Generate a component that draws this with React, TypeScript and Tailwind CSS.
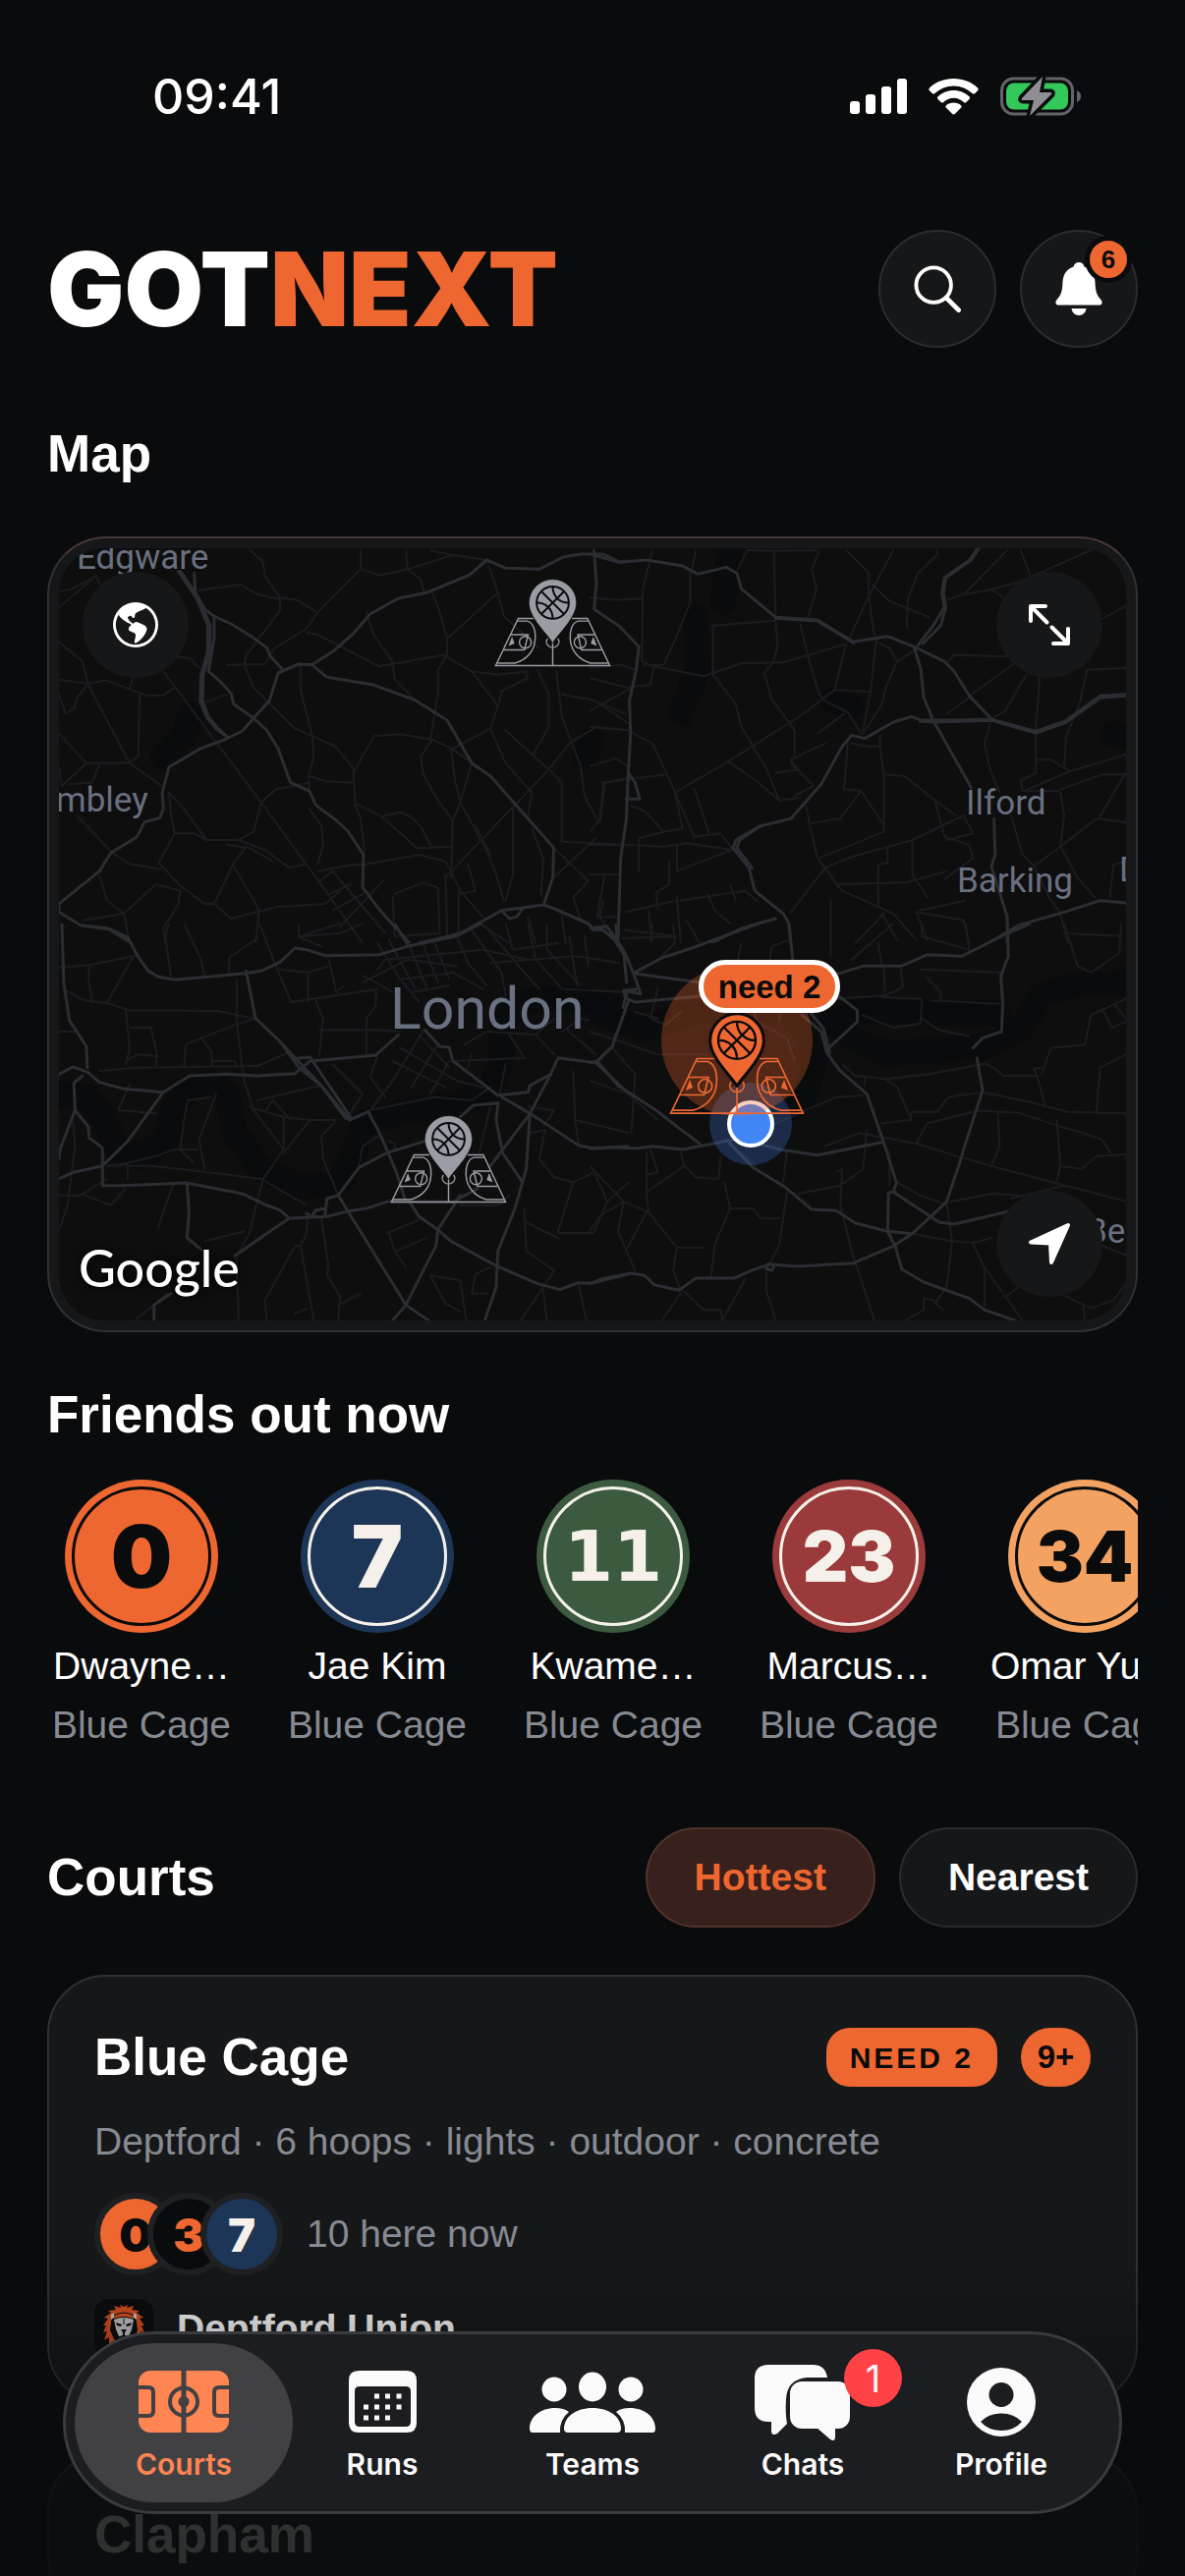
import React from 'react'
import { BsGlobeAmericas } from 'react-icons/bs'

type Tile = {
  id: string
  x: number
  y: number
  width: number
  height: number
  viewBox: string
  water: string[]
  major: string[]
  minor: string[]
}

// Road network, one entry per map tile. Every string is a polyline.
const tiles: Tile[] = [
  {
    id: 'nw',
    x: 40,
    y: 540,
    width: 600,
    height: 420,
    viewBox: '0 0 1568 1260',
    water: ['400,560 390,620 330,690', '1470,640 1450,690'],
    major: [
      '370,125 420,210 448,290 448,370 430,440 428,520 445,570 470,605 500,630',
      '376,125 426,210 454,290 454,370 436,440 434,520 451,570 476,605 500,630',
      '412,130 415,190 440,240 465,262 465,330 450,430 480,460 510,497 517,530 570,573 605,610 635,665 668,770 718,795 735,838 790,885 822,920 862,990 860,1090 910,1165 985,1260',
      '465,262 510,285 560,320 605,358 615,385 648,425',
      '52,1140 160,1040 190,985 260,935 280,890 320,878 330,850 327,800 345,722 430,665 490,640 540,612 570,573 612,520 635,435 690,408 725,410 765,448 885,470 1000,518 1085,580 1150,710 1200,750 1368,968 1366,1060 1342,1140',
      '725,410 780,370 835,315 880,255 955,207 1030,190 1145,135 1190,90 1240,115 1330,118 1395,80 1440,72 1500,72 1545,97 1568,93',
      '52,1140 52,1165 110,1205 185,1217 245,1260',
      '1010,1260 1120,1230 1230,1160 1342,1143 1370,1155 1460,1200 1475,1220 1500,1220 1540,1258',
      '1230,1160 1250,1185 1270,1180 1285,1155',
    ],
    minor: [
      '52,185 85,180 150,140 165,170',
      '52,235 140,150',
      '52,340 115,400 130,470 240,710 325,780',
      '52,455 130,468 175,457 290,505 330,503 360,480',
      '250,450 240,480',
      '267,495 263,690 240,710 125,710 52,620',
      '130,470 100,510 95,540 70,560 52,500',
      '125,710 60,780 52,720',
      '160,715 140,770 80,775',
      '330,430 590,830 780,1130 860,1260',
      '365,385 400,390 425,420',
      '425,182 535,165 580,195 640,210 640,245 550,380 545,410 570,480 680,605 785,657 835,725 840,840 855,880 865,990',
      '560,60 595,95 600,140 640,205 685,212 740,250 710,300 625,360 600,408 500,410',
      '500,500 440,525',
      '740,250 855,118 855,60',
      '855,118 905,137 980,118 1100,75 1190,90',
      '975,60 980,118 1015,150 1022,185',
      '1040,60 1100,75',
      '710,312 740,318 905,415 1075,380 1150,430 1220,440 1300,430',
      '870,250 890,320 940,400 945,455 1000,518',
      '1045,190 1060,230 1085,330 1220,190 1190,90',
      '1085,330 1085,380 1060,425 1060,500 1040,640',
      '695,410 695,490 725,620 730,690 717,745 718,795',
      '835,740 890,628 960,622 1045,638 1095,665 1150,710',
      '1045,638 1015,690 1020,740 1060,825 1100,885 1095,1060',
      '1150,710 1120,830 1100,885',
      '1095,665 1105,760 1120,830 1195,990 1215,1050 1235,1130',
      '845,835 910,873 960,860 990,875 1015,905 1045,970',
      '910,873 1005,970 1100,965',
      '865,1020 1010,990 1080,1010 1120,1100 1180,1180',
      '1150,430 1220,535 1200,605 1240,710 1310,800 1300,870',
      '1220,190 1235,260 1330,360',
      '1200,605 1100,665',
      '1220,535 1230,490 1300,450 1290,430',
      '1325,425 1355,500 1355,600 1315,680',
      '1375,430 1390,570 1440,720 1450,810 1487,890',
      '1390,500 1480,520 1568,590',
      '1240,610 1355,730 1410,650 1480,600 1568,610',
      '1355,730 1255,850 1080,1060',
      '1355,730 1390,770 1390,950 1568,960',
      '1260,850 1260,1050 1240,1130',
      '1310,910 1340,1000 1335,1110',
      '1500,770 1568,755',
      '1500,770 1490,890',
      '590,830 630,790 718,770',
      '718,750 760,765 835,770',
      '718,850 750,900 755,960 740,1020',
      '360,925 410,925 445,945 530,945 570,920 590,830',
      '530,945 600,975 665,1030 705,1020',
      '500,960 560,970 620,1010',
      '445,945 385,850 345,800 350,870 360,925 318,1015 375,1085 440,1140 465,1140 515,1020 550,965',
      '515,1020 585,1160 575,1260',
      '465,1140 510,1185 630,1150 760,1140 800,1100',
      '100,870 195,985 240,1018 325,1035',
      '160,1055 180,1130 225,1170 310,1080 375,1100 370,1140 330,1215 335,1260',
      '240,1260 225,1170 115,1190',
      '945,1110 1020,1075 1060,1090 1065,1230 945,1240 940,1120',
      '740,1040 835,1020 865,1020',
      '740,1075 780,1040 920,1230',
      '770,1110 830,1080',
      '780,1160 860,1110',
      '800,1210 915,1070',
      '690,1240 800,1200',
      '1080,1050 1085,1240',
      '1115,1100 1115,1240',
      '1140,1020 1160,1100 1120,1110',
      '1160,900 1200,990',
      '1368,968 1460,1070 1420,1120 1440,1190',
      '1368,1060 1480,940',
      '1540,1260 1490,1180 1500,1130',
      '1170,1200 1250,1260',
      '1300,1180 1320,1260',
      '1390,1180 1400,1260',
    ],
  },
  {
    id: 'ne',
    x: 600,
    y: 540,
    width: 606,
    height: 420,
    viewBox: '0 0 1568 1260',
    water: ['370,70 350,220', '280,260 285,420 240,560', '640,520 690,540', '1380,620 1400,630'],
    major: [
      '12,60 18,160 12,240 78,292 130,355 122,430 105,520 108,620 102,740 97,880 82,1000 75,1250',
      '102,740 120,770 132,820 97,820',
      '0,72 78,97 150,90 245,108 285,133 360,112 388,130 400,178 490,265 600,273 695,340 785,323 855,355 935,400 960,430 1000,505 1060,577',
      '490,268 600,276 695,343',
      '1025,55 1005,90 938,145 932,190 938,235 925,290 878,345',
      '1021,55 1001,90 934,145 928,190 934,235 905,290 865,350',
      '855,360 872,420 880,510 905,580 1005,785',
      '1065,880 1068,990 1058,1025 1100,1180 1100,1260',
      '1412,500 1345,505 1255,580 1175,613 1060,577 905,580 870,578 848,568 800,585 725,635 690,625 665,660 610,775 530,880 450,902 385,945 378,970 420,1030 435,1100 510,1170 525,1200 530,1260',
      '1412,505 1345,511 1255,586 1175,618 1060,580 905,585 870,582',
      '450,902 395,945 388,970 428,1030',
      '320,1260 400,1215 490,1185',
      '1050,1260 1130,1205 1250,1165 1345,1130 1412,1137',
    ],
    minor: [
      '165,60 140,180 138,400 170,415 300,445 400,405 510,403 670,348',
      '265,120 265,220 230,320 195,410 140,412',
      '0,205 70,212 138,208',
      '280,60 270,120',
      '415,60 390,120',
      '415,60 485,62 600,60',
      '485,62 490,260',
      '605,60 585,120 598,180 575,265',
      '675,60 735,130 735,200 680,340',
      '800,60 735,200',
      '915,60 915,75 865,130 838,210 835,300',
      '745,165 790,215 895,265',
      '735,200 750,320',
      '1100,60 985,195 945,210',
      '985,195 1060,180 1135,155 1320,60',
      '1135,60 1160,135',
      '1060,180 1090,205',
      '1350,270 1412,230',
      '325,290 490,275 495,350 485,400 460,435 480,515 540,610 540,695',
      '325,290 325,440 385,530 400,600 465,725 500,825 555,815',
      '225,800 365,705 550,570 645,487 740,492 720,610',
      '645,487 675,348',
      '740,492 755,330',
      '555,285 575,385 605,500 620,520 680,555 715,620',
      '755,340 790,360 810,400 780,480 770,530 720,620',
      '810,400 850,370',
      '600,620 670,560',
      '365,705 445,770 500,825',
      '530,710 590,780 540,810',
      '490,740 550,730 530,700 620,650',
      '225,800 275,935 345,925 375,970',
      '275,785 315,925',
      '780,745 830,750 910,825 965,870',
      '690,650 735,660 765,660 775,750 775,920 605,1000',
      '680,650 670,790 715,795 775,900',
      '765,625 765,660',
      '570,840 580,900 600,1000 620,1030 665,1100 800,1170 860,1250',
      '580,895 660,880 715,795',
      '620,1030 680,1000 850,945 985,870',
      '850,945 850,1050 890,1120',
      '785,965 785,1015 760,1020 760,1150',
      '650,1080 835,1075 940,1040',
      '665,1100 650,1080 620,1030 530,1165',
      '910,825 935,935 1000,960 1010,1000 935,1065',
      '985,870 1010,925 940,945',
      '1000,505 1120,405',
      '945,400 960,380 1100,385',
      '1150,440 1095,550 1060,575',
      '1185,450 1175,610 1175,740 1135,765 1140,795',
      '940,560 1000,510',
      '1055,590 1040,650 1055,730 1080,800',
      '1175,700 1215,700 1265,735 1145,795',
      '1265,735 1412,685',
      '1145,795 1230,795 1350,745 1412,745',
      '1110,870 1140,990 1170,1025 1240,965 1335,880 1412,890',
      '1412,740 1340,880',
      '1240,800 1250,870 1240,965 1285,1060 1330,1120',
      '1412,420 1310,425 1290,530 1255,630 1250,720',
      '635,1130 635,1260',
      '775,1170 700,1260',
      '770,1170 810,1250',
      '860,1165 985,1190 1000,1260',
      '860,1165 890,1250',
      '870,1160 990,1130',
      '1210,1120 1240,1170 1260,1260',
      '1370,1120 1380,1020 1412,1010',
      '1170,1025 1210,1120',
      '0,450 100,480 160,470 170,415',
      '0,420 80,410 120,425',
      '0,600 100,610 165,650 205,745 225,800',
      '0,550 105,485',
      '0,515 95,560',
      '40,770 100,760 205,745',
      '0,720 70,695 100,720',
      '40,770 30,880 0,920',
      '110,840 150,860 195,920 245,910 225,800',
      '0,960 100,960 195,965 255,955 375,975',
      '130,1040 130,940 195,920',
      '230,960 230,1040 375,975',
      '0,1050 75,1050',
      '40,1050 20,1180 75,1180',
      '95,1165 210,1135 410,1100 440,1130',
      '180,1155 175,1105 210,1080 210,1010',
      '230,1120 240,1260',
      '370,1080 385,1130',
      '155,1160 165,1260',
      '255,1190 290,1260',
      '310,1110 330,1160 370,1200',
      '95,1220 230,1240',
    ],
  },
  {
    id: 'sw',
    x: 40,
    y: 940,
    width: 600,
    height: 440,
    viewBox: '0 0 1568 1320',
    water: [
      '52,520 130,530 175,600 210,690 270,712 330,670 360,560 400,500 460,485 500,520 520,640 590,750 700,805 800,790 840,690 860,610 950,580 1100,550 1195,520 1225,430 1235,300 1280,240 1400,225 1500,245 1568,280',
    ],
    major: [
      '60,0 65,180 80,295 125,375 128,440',
      '110,5 185,15 235,42 262,100 290,145 315,162 360,172 550,152 590,145 640,118 680,75 710,80 760,98 905,95 985,68 1110,38 1175,0',
      '550,145 575,290 640,360 680,410 750,495 825,600 875,575 905,640 950,760 975,850',
      '640,360 690,440 750,495 815,595',
      '680,412 720,408 830,595',
      '52,460 90,438 130,455 160,485 225,505 330,515 400,465 500,460 580,465 680,458 720,420 745,418 895,402 955,340',
      '115,465 92,487 95,570 55,690 52,720',
      '95,570 130,620 133,655 168,685 168,800 225,800 390,792 540,825 600,858 640,875 665,900 765,895 815,880 870,870 930,848 1100,850 1165,810',
      '52,780 90,760 168,740 235,665 330,515',
      '393,792 398,880 393,960 430,995',
      '665,900 600,950 520,1015',
      '350,1130 305,1165 305,1212',
      '760,890 765,840 795,830 850,745 925,700 1025,665',
      '795,830 975,1165 1035,1212',
      '940,1212 975,1165 1030,1040 1055,985 1060,935 1010,895 985,850',
      '1060,935 1120,830',
      '1060,935 1095,970 1215,1045 1325,1100 1385,1118 1430,1098 1470,1098 1568,1070',
      '1185,1212 1215,1110 1220,1000 1265,870 1295,750 1305,580',
      '1025,325 1065,375 1090,378 1100,420 1220,525 1300,515 1305,495 1360,460 1380,410 1480,425 1568,520',
      '1480,425 1525,375 1562,215',
      '1460,0 1475,20 1495,15 1530,50 1555,95 1562,180',
      '1120,590 1155,555 1220,548 1215,600 1232,700 1285,790',
      '1230,530 1305,580 1435,678 1475,687 1568,680',
      '1360,460 1305,580 1200,740',
      '945,0 980,65',
      '710,885 725,895 735,875 760,870',
    ],
    minor: [
      '52,135 140,125 255,98',
      '135,125 130,160 140,240',
      '70,205 120,235 180,243 240,265 475,267 570,290',
      '250,100 180,243',
      '345,0 335,40 350,160',
      '230,265 240,380 230,430',
      '243,318 297,318 313,400 310,440',
      '230,420 260,400 313,405',
      '570,292 520,310 430,350 390,370 385,435',
      '430,350 458,390 460,435',
      '460,420 520,420 525,440',
      '52,330 95,330',
      '160,450 260,440 580,435 670,390',
      '525,170 525,300 540,440 545,480 570,570 650,690',
      '385,0 430,110 440,165',
      '585,0 640,160 670,240 900,200',
      '715,150 715,240',
      '640,140 715,150 770,130',
      '735,235 755,290 745,400',
      '505,150 505,105 580,45',
      '690,0 690,40 750,70',
      '690,40 800,30 860,0',
      '770,110 790,210 810,190',
      '895,205 895,250 870,290 870,400',
      '745,325 900,325 960,330',
      '560,560 645,590 720,600 790,600',
      '650,595 650,690 595,780 560,940 525,1020 530,1212',
      '720,600 650,700',
      '580,540 690,510 750,495',
      '600,575 620,540 670,600',
      '790,600 750,650 755,720 795,830',
      '455,530 395,540 385,600 375,690 410,730',
      '470,520 425,660 440,750',
      '240,490 210,570 310,580',
      '180,740 235,735 235,780',
      '200,740 310,710 360,690 420,690',
      '235,740 300,740 450,760 590,780 710,860',
      '52,830 110,830 180,780',
      '120,830 190,860 230,810',
      '355,800 315,930',
      '90,605 95,680 75,860 55,930',
      '440,970 545,940',
      '605,1212 600,1150 680,985 695,985 730,1212',
      '715,890 710,950 695,985',
      '750,900 770,1050 765,1070 800,1140 795,1212',
      '795,1165 855,1130',
      '680,1190 715,1175',
      '255,1212 340,1130',
      '925,945 1010,905',
      '930,945 945,1000 975,1050',
      '1040,1075 1120,1090 1135,1212',
      '1040,1075 1080,1160 1120,1185',
      '1190,1130 1150,1130 1160,1070 1200,1050',
      '950,1000 1030,960',
      '1120,860 1220,860 1250,830',
      '1100,420 1210,415 1290,410',
      '1290,870 1295,1000 1370,1060 1340,1110 1280,1212',
      '1290,910 1380,960',
      '1340,1120 1350,1212',
      '1380,945 1475,945 1510,850 1568,790',
      '1380,940 1420,790 1475,760 1500,820 1510,850',
      '1435,680 1425,600 1500,620 1568,640',
      '1435,1105 1455,1212',
      '1425,600 1420,450',
      '1305,640 1345,630 1330,720 1370,775 1420,790',
      '1300,560 1370,570 1340,620',
      '900,140 920,110 1180,80 1300,110',
      '900,60 960,170 1010,240',
      '930,50 1000,200',
      '985,70 1030,195',
      '1020,60 1060,180',
      '1050,55 1090,170',
      '1110,38 1140,120 1190,190',
      '1150,20 1230,150 1240,220',
      '860,180 980,110 1110,130',
      '960,170 1100,150 1180,200',
      '990,210 1090,190',
      '860,160 880,170 940,210',
      '1180,0 1290,150 1330,200',
      '1240,0 1260,80 1380,60',
      '1300,0 1320,110 1390,200 1568,210',
      '1200,120 1430,100 1540,120',
      '1350,0 1350,80 1440,190',
      '1410,40 1430,190',
      '1450,40 1460,130',
      '1130,370 1190,330 1320,340 1370,290',
      '1150,400 1140,440',
      '1250,340 1290,410',
      '1320,340 1370,400',
      '1390,330 1440,290 1480,300',
      '1400,320 1480,400',
      '1020,330 940,480 880,570',
      '1060,370 990,500',
      '1090,420 1040,520',
      '900,400 880,470 920,530',
      '960,380 1110,480 1180,500',
      '940,420 1080,500',
      '1010,340 1090,440',
      '780,430 860,520 820,590',
      '880,570 1050,530 1150,540 1200,500',
      '1240,430 1225,520',
      '1170,700 1200,560',
      '860,680 850,740',
      '860,680 900,650',
      '930,665 945,670 945,695 925,695',
    ],
  },
  {
    id: 'se',
    x: 600,
    y: 940,
    width: 606,
    height: 440,
    viewBox: '0 0 1568 1320',
    water: [
      '0,260 80,300 150,320 250,280 400,250 520,270 580,340 590,440 560,540 540,560',
      '640,300 700,360 780,395 900,390 1040,375 1130,330 1190,220 1260,190 1412,180',
      '690,265 860,270 1080,275',
    ],
    major: [
      '0,15 45,8 75,55 95,95 115,150 135,215 90,205 95,230',
      '70,0 72,50',
      '445,0 350,40 270,75 190,105 115,152 290,180',
      '90,205 125,200',
      '100,230 120,240 290,222 480,220',
      '525,0 535,110',
      '103,235 60,375 20,420 75,495 175,570 230,620 290,672',
      '0,425 20,420',
      '0,687 60,683 125,687 165,680 245,690 380,660 470,680 500,690 600,707 770,668',
      '360,660 430,745 515,805 585,873 650,877 700,915 785,940 850,947',
      '0,1100 40,1083 110,1068 145,1075 170,1103 235,1120 280,1083 380,1083 430,1058 475,1040 545,1047 695,1037 800,985 850,947 940,850 975,730 985,690 1035,510 1020,410',
      '470,1040 465,1055 480,1060 487,1042',
      '1010,380 1035,350 1085,330 1088,245 1083,160 1103,100 1100,0',
      '650,155 720,130 820,130 890,95 980,100 1100,30 1160,0',
      '660,225 705,265 705,300 625,385',
      '560,280 610,330 625,395 660,450 730,520 775,670 808,790 800,820 920,912 960,918 1100,880',
      '580,270 616,320 632,395',
      '805,820 787,822 785,940 805,985 822,1055 880,1095 1000,1145 1040,1180 1120,1212',
    ],
    minor: [
      '85,45 230,40',
      '165,0 160,50',
      '220,0 225,60 190,100',
      '635,0 635,100',
      '800,0 690,110',
      '760,60 770,130',
      '475,110 480,70 525,50',
      '400,60 390,110',
      '875,0 875,40 1000,80',
      '990,0 1000,80',
      '1250,0 1285,130 1320,150 1395,90 1400,0',
      '1250,30 1400,38',
      '775,135 778,220 650,230',
      '820,140 825,195 770,225 875,230 872,305 800,318 720,280',
      '870,140 1090,150',
      '885,160 925,210 925,230',
      '900,235 1080,245',
      '875,290 920,325 1000,345',
      '665,430 700,465 780,475 895,460 940,450 1040,428 1070,445 1090,465 1180,465',
      '725,495 725,465',
      '780,475 810,500 848,600',
      '1412,230 1320,280 1305,370 1215,380 1190,460',
      '1350,260 1375,318 1412,300',
      '1385,250 1412,290',
      '1190,440 1170,445 1180,470 1200,560',
      '450,630 650,530 720,525',
      '770,610 845,600 848,575 915,575 945,530 1035,515',
      '1035,515 1160,545 1260,575 1412,580',
      '1030,572 1130,578 1240,620 1300,640 1350,660 1370,700',
      '1075,580 1080,680 1060,735',
      '620,680 710,640 780,655 860,672 980,715 1120,760 1412,848',
      '860,672 890,610 1030,570',
      '1230,600 1240,740 1295,750 1335,710 1412,705',
      '1230,790 1240,740',
      '1345,440 1335,570',
      '1412,400 1345,440',
      '810,790 870,830 930,855',
      '950,850 1060,825 1130,830',
      '1110,840 1250,800',
      '940,850 955,970 1010,975 1060,960',
      '850,947 955,970',
      '1010,980 1040,1050 1140,1212',
      '1040,1050 1040,1170',
      '1095,1140 1130,1110',
      '1340,980 1412,1012',
      '1300,1170 1305,1212',
      '1240,1130 1320,1175 1380,1150 1412,1100',
      '830,1212 880,1180 880,1145 905,1150 930,1180',
      '910,1160 940,1110 955,970',
      '665,760 660,860 690,1000 750,1212',
      '650,760 665,750 665,780',
      '550,825 660,800 720,750 730,630',
      '770,670 790,700 790,800',
      '240,700 250,740 150,820 155,880 90,850 0,740',
      '355,790 370,870 330,980 320,1080',
      '370,870 430,870 450,900 500,900',
      '520,820 500,980 465,1060 465,1120 490,1212',
      '250,740 280,775 340,780 345,710',
      '155,880 230,990 300,990',
      '230,990 220,1060 240,1120',
      '90,850 75,940 120,1060',
      '90,850 30,890 0,940',
      '150,820 150,700',
      '155,870 100,990',
      '245,1120 300,1180 345,1180 350,1212',
      '240,1130 190,1212',
      '410,1085 350,1212',
      '160,690 180,760 155,765',
      '0,330 80,360 180,400 310,400',
      '60,380 120,460 110,640',
      '0,480 100,520 180,600',
      '430,250 440,300 520,350 540,420',
      '500,230 500,300',
      '180,200 160,290 200,310 240,270',
      '120,270 180,290',
      '400,700 440,740',
      '520,690 510,790',
    ],
  },
]

const friends = [
  { number: '0', name: 'Dwayne…', court: 'Blue Cage', disc: 'bg-[#ef6730] text-[#0a0b0c]', ring: 'border-[#0a0b0c]', digits: "font-['Inter',sans-serif] text-[88px]" },
  { number: '7', name: 'Jae Kim', court: 'Blue Cage', disc: 'bg-[#1d3557] text-[#f5f1ea]', ring: 'border-[#f5f1ea]', digits: "font-['Inter',sans-serif] text-[88px]" },
  { number: '11', name: 'Kwame…', court: 'Blue Cage', disc: 'bg-[#3b5a3f] text-[#f5f1ea]', ring: 'border-[#f5f1ea]', digits: "font-['DejaVu_Sans',sans-serif] text-[72px]" },
  { number: '23', name: 'Marcus…', court: 'Blue Cage', disc: 'bg-[#9b3a3b] text-[#f5f1ea]', ring: 'border-[#f5f1ea]', digits: "font-['Inter',sans-serif] text-[72px]" },
  { number: '34', name: 'Omar Yu…', court: 'Blue Cage', disc: 'bg-[#f4a261] text-[#0a0b0c]', ring: 'border-[#0a0b0c]', digits: "font-['Inter',sans-serif] text-[72px]" },
]

function StatusBar() {
  return (
    <div className="flex h-[196px] items-center justify-between pl-[155px] pr-[104px]">
      <span className="font-['Inter',sans-serif] text-[50px] font-medium leading-[60px]">09:41</span>
      <div className="flex items-center gap-[22px]">
        <svg className="h-[38px] w-[58px]" viewBox="0 0 58 38" fill="#fff">
          <rect x="0" y="24" width="10" height="13" rx="3" />
          <rect x="16" y="17" width="10" height="20" rx="3" />
          <rect x="32" y="9" width="10" height="28" rx="3" />
          <rect x="48" y="1" width="10" height="36" rx="3" />
        </svg>
        <svg className="h-[38px] w-[51px]" viewBox="0 0 51 38" fill="#fff">
          <path d="M25.500 1C35 1 44 4.500 50 10.500Q51.300 12 50 13.300L47 16.200Q45.800 17 44.500 16C39.500 11.500 33 8.500 25.500 8.500S11.500 11.500 6.500 16Q5.200 17 4 16.200L1 13.300Q-.3 12 1 10.500C7 4.500 16 1 25.500 1Z" />
          <path d="M25.500 13C32 13 37.500 15.500 41.500 19.300Q42.800 20.500 41.500 22L38.300 25Q37 26 35.800 25C33 22.500 29.500 20.800 25.500 20.800S18 22.500 15.200 25Q14 26 12.700 25L9.500 22Q8.200 20.500 9.500 19.300C13.500 15.500 19 13 25.500 13Z" />
          <path d="M25.500 25.500C28.500 25.500 31.200 26.500 33 28.200Q34.300 29.500 33 30.800L27 36.800Q25.500 38.200 24 36.800L18 30.800Q16.700 29.500 18 28.200C19.800 26.500 22.500 25.500 25.500 25.500Z" />
        </svg>
        <svg className="h-[42px] w-[84px]" viewBox="0 0 84 42">
          <rect x="1.500" y="3" width="72" height="36" rx="12" fill="none" stroke="#636467" strokeWidth="3" />
          <rect x="6" y="7.500" width="63" height="27" rx="8" fill="#34c759" />
          <path d="M78 15Q82 17 82 21T78 27Z" fill="#636467" />
          <path d="M43 1L22 23Q21 25 23 25H34L30 41L52 19Q53 17 51 17H40Z" fill="#8e8e93" stroke="#0a0b0c" strokeWidth="7" strokeLinejoin="round" paintOrder="stroke" />
        </svg>
      </div>
    </div>
  )
}

function Header() {
  return (
    <header className="mt-[38px] flex items-center justify-between px-12">
      <h1 className="font-['Inter',sans-serif] text-[104px] font-black leading-[120px]">
        GOT<span className="text-[#ef6730]">NEXT</span>
      </h1>
      <div className="flex gap-6">
        <button aria-label="Search" className="flex size-[120px] items-center justify-center rounded-full border-2 border-[#2a2c30] bg-[#161719]">
          <svg className="size-[48px]" viewBox="0 0 50 50" fill="none" stroke="#fff" strokeWidth="4" strokeLinecap="round">
            <circle cx="21" cy="21" r="18.500" />
            <path d="M35 35L47.500 47.500" strokeWidth="5" />
          </svg>
        </button>
        <button aria-label="Notifications, 6 new" className="relative flex size-[120px] items-center justify-center rounded-full border-2 border-[#2a2c30] bg-[#161719]">
          <svg className="h-[54px] w-[48px]" viewBox="0 0 48 54" fill="#fff">
            <path d="M24 0C27 0 29 2 29.500 4.500C36 6.500 40 12 40.500 20C41 30 42 33 46 37.500C49 41 47.500 43.500 44 43.500H4C.5 43.500 -1 41 2 37.500C6 33 7 30 7.500 20C8 12 12 6.500 18.500 4.500C19 2 21 0 24 0Z" />
            <path d="M16.500 47H31.500C31 51 28 54 24 54S17 51 16.500 47Z" />
          </svg>
          <span className="absolute right-1 top-1 flex size-12 items-center justify-center rounded-full border-[5px] border-[#0a0b0c] bg-[#ef6730] text-[26px] font-bold leading-none text-[#0a0b0c]">6</span>
        </button>
      </div>
    </header>
  )
}

function CourtPin({ color, outlined }: { color: string; outlined?: boolean }) {
  return (
    <svg className="size-full" viewBox="120 205 420 320" fill="none" stroke={color} strokeWidth="5">
      <path d="M262 353H208L128 520H532L453 353H398" />
      <path d="M205 362H240C262 368 270 396 268 425C266 468 238 500 196 511H134" />
      <path d="M456 362H420C398 368 390 396 392 425C394 468 424 500 464 511H526" />
      <path d="M181 410H243L230 464H156" />
      <path d="M479 410H419L432 464H504" />
      <circle cx="233" cy="437" r="21" />
      <circle cx="427" cy="437" r="21" />
      <path d="M186 424L178 446L192 440ZM474 424L482 446L468 440Z" fill={color} />
      <path d="M312 424A22 20 0 1 0 348 424M330 440V520" />
      <path
        d="M330 437C318 412 248 352 248 298A82 82 0 0 1 412 298C412 352 342 412 330 437Z"
        fill={color}
        stroke={outlined ? '#0a0b0c' : color}
        strokeWidth={outlined ? 9 : 2}
        strokeLinejoin="round"
      />
      <g stroke="#0a0b0c" strokeWidth="7">
        <circle cx="330" cy="297" r="57" />
        <path d="M290 257L370 337M290 337L370 257M273 297C305 296 330 318 330 354M387 297C355 298 330 276 330 240" />
      </g>
    </svg>
  )
}

function MapCard() {
  return (
    <div className="rounded-[60px] border-2 border-[#2f3134] border-t-[#463637] bg-[#161719] p-[10px]">
      <div className="relative h-[786px] overflow-hidden rounded-[46px] bg-[#0e0e0f]">
        <svg className="absolute inset-0 size-full" viewBox="60 558 1086 786" preserveAspectRatio="xMidYMid slice" fill="none" strokeLinejoin="round" strokeLinecap="round">
          {tiles.map((tile) => (
            <svg key={tile.id} x={tile.x} y={tile.y} width={tile.width} height={tile.height} viewBox={tile.viewBox} preserveAspectRatio="none">
              {tile.water.map((points) => (
                <polyline key={points} points={points} stroke="#0a0b0c" strokeWidth="26" vectorEffect="non-scaling-stroke" />
              ))}
              {tile.minor.map((points) => (
                <polyline key={points} points={points} stroke="#1b1c20" strokeWidth="2" vectorEffect="non-scaling-stroke" />
              ))}
              {tile.major.map((points) => (
                <polyline key={points} points={points} stroke="#2a2d31" strokeWidth="3" vectorEffect="non-scaling-stroke" />
              ))}
            </svg>
          ))}
          <circle cx="764" cy="1144" r="42" fill="#4285f4" fillOpacity="0.25" />
          <circle cx="764" cy="1144" r="22" fill="#4285f4" stroke="#fff" strokeWidth="4" />
          <circle cx="750" cy="1059" r="77" fill="#ef6730" fillOpacity="0.3" />
        </svg>

        {/* Place names */}
        <div className="font-['Roboto',sans-serif] text-[35px] leading-10 text-[#697080]">
          <span className="absolute left-[18px] top-[-10px]">Edgware</span>
          <span className="absolute left-[-3px] top-[237px]">mbley</span>
          <span className="absolute left-[923px] top-[240px]">Ilford</span>
          <span className="absolute left-[914px] top-[319px]">Barking</span>
          <span className="absolute left-[1079px] top-[308px]">D</span>
          <span className="absolute left-[1045px] top-[676px]">Bex</span>
          <span className="absolute left-[337px] top-[434px] text-[59px] leading-[70px]">London</span>
        </div>

        {/* Courts */}
        <div className="absolute left-[442px] top-[29px] h-[92px] w-[121px]">
          <CourtPin color="#9a9da3" />
        </div>
        <div className="absolute left-[336px] top-[575px] h-[92px] w-[121px]">
          <CourtPin color="#9a9da3" />
        </div>
        <div className="absolute left-[620px] top-[470px] h-[107px] w-[140px]">
          <CourtPin color="#ef6730" outlined />
        </div>
        <span className="absolute left-[651px] top-[419px] flex h-[54px] w-[144px] items-center justify-center rounded-full border-[5px] border-white bg-[#ef6730] text-[33px] font-bold leading-none text-[#0a0b0c]">
          need 2
        </span>

        <span className="absolute bottom-[22px] left-[20px] font-['Lato',sans-serif] text-[52px] font-medium leading-[64px] text-white [text-shadow:0_0_8px_#000]">Google</span>

        {/* Controls */}
        <button aria-label="Map type" className="absolute left-6 top-6 flex size-[108px] items-center justify-center rounded-full bg-[#161719]">
          <BsGlobeAmericas className="size-[46px]" />
        </button>
        <button aria-label="Expand map" className="absolute right-6 top-6 flex size-[108px] items-center justify-center rounded-full bg-[#161719]">
          <svg className="size-[44px]" viewBox="0 0 44 44" fill="none" stroke="#fff" strokeWidth="4" strokeLinecap="round" strokeLinejoin="round">
            <path d="M3 18V3H18M3 3L19.500 19.500M26 41H41V26M41 41L24.500 24.500" />
          </svg>
        </button>
        <button aria-label="Centre on my location" className="absolute bottom-6 right-6 flex size-[108px] items-center justify-center rounded-full bg-[#161719]">
          <svg className="size-[44px]" viewBox="0 0 44 44" fill="#fff" stroke="#fff" strokeWidth="4" strokeLinejoin="round">
            <path d="M41 3L3 20.500L23 21.500L24 41Z" />
          </svg>
        </button>
      </div>
    </div>
  )
}

function LionBadge() {
  return (
    <svg className="size-[60px] rounded-[14px] bg-[#0a0b0c]" viewBox="0 0 60 60">
      <path
        d="M30 8L26 6L27 9L20 7L22 11L14 12L17 14L10 19L14 20L9 27L12 27L9 34L13 33L10 42L15 39L15 48L20 44L24 54L30 50L36 54L40 44L45 48L45 39L50 42L47 33L51 34L48 27L51 27L46 20L50 19L43 14L46 12L38 11L40 7L33 9L34 6Z"
        fill="#d9501f"
      />
      <path d="M18 17Q30 10 42 17L44 32L38 45L30 50L22 45L16 32Z" fill="#0a0b0c" />
      <path d="M20 17Q30 12 40 17V20Q30 16 20 20Z" fill="#d9501f" />
      <path d="M17 16L20 14L20 19L17 21ZM43 16L40 14L40 19L43 21Z" fill="#cfcfcf" />
      <path d="M20 21Q30 17 40 21L38 31L35 38H25L22 31Z" fill="#c9c9c6" />
      <path d="M22 24L28 26L27 28L23 27ZM38 24L32 26L33 28L37 27ZM29.500 20H30.500V26H29.500ZM27 31H33L31 34V37L34 38H26L29 37V34Z" fill="#0a0b0c" />
      <path d="M26 41H34L32 46H28Z" fill="#c9c9c6" />
    </svg>
  )
}

function Friends() {
  return (
    <section className="mt-[54px]">
      <h2 className="text-[53px] font-bold leading-[60px]">Friends out now</h2>
      <ul className="mt-9 flex gap-12 overflow-x-auto [scrollbar-width:none]">
        {friends.map((friend) => (
          <li key={friend.name} className="flex w-48 shrink-0 flex-col items-center whitespace-nowrap text-[39px] leading-[48px]">
            <div className={`size-[156px] rounded-full p-[7px] ${friend.disc}`}>
              <div className={`flex size-full items-center justify-center rounded-full border-[3px] font-black leading-none ${friend.ring} ${friend.digits}`}>
                {friend.number}
              </div>
            </div>
            <span className="mt-[10px]">{friend.name}</span>
            <span className="mt-3 text-[#868a92]">{friend.court}</span>
          </li>
        ))}
      </ul>
    </section>
  )
}

function Courts() {
  return (
    <section className="mt-20">
      <div className="flex items-center justify-between">
        <h2 className="text-[53px] font-bold leading-[60px]">Courts</h2>
        <div className="flex gap-6 text-[39px] font-bold leading-[48px]">
          <button className="h-[102px] rounded-full border-2 border-[#51332d] bg-[#38211c] px-12 text-[#ef6730]">Hottest</button>
          <button className="h-[102px] rounded-full border-2 border-[#2a2c30] bg-[#161719] px-12">Nearest</button>
        </div>
      </div>

      <article className="mt-12 rounded-[60px] border-2 border-[#2f3134] bg-[#161719] p-[46px]">
        <div className="flex h-[72px] items-center">
          <h3 className="flex-1 text-[53px] font-bold leading-[60px]">Blue Cage</h3>
          <span className="flex h-[60px] items-center rounded-3xl bg-[#ef6730] px-6 text-[30px] font-bold tracking-widest text-[#0a0b0c]">NEED 2</span>
          <span className="ml-6 flex h-[60px] w-[71px] items-center justify-center rounded-full bg-[#ef6730] text-[33px] font-bold text-[#0a0b0c]">9+</span>
        </div>
        <p className="mt-[26px] text-[39px] leading-[48px] text-[#868a92]">Deptford · 6 hoops · lights · outdoor · concrete</p>
        <div className="mt-7 flex items-center">
          <div className="flex font-['Inter',sans-serif] text-[47px] font-black leading-none">
            <span className="flex size-[84px] items-center justify-center rounded-full border-[6px] border-[#1e2022] bg-[#ef6730] text-[#0a0b0c]">0</span>
            <span className="z-10 -ml-[30px] flex size-[84px] items-center justify-center rounded-full border-[6px] border-[#1e2022] bg-[#0a0b0c] text-[#ef6730]">3</span>
            <span className="z-20 -ml-[30px] flex size-[84px] items-center justify-center rounded-full border-[6px] border-[#1e2022] bg-[#1d3557] text-[#f5f1ea]">7</span>
          </div>
          <span className="ml-6 text-[39px] leading-[48px] text-[#868a92]">10 here now</span>
        </div>
        <div className="mt-6 flex items-center gap-6">
          <LionBadge />
          <span className="text-[39px] font-bold leading-[48px]">Deptford Union</span>
        </div>
      </article>

      <article className="mt-12 rounded-[60px] border-2 border-[#2f3134] bg-[#161719] p-[46px]">
        <div className="flex h-[72px] items-center">
          <h3 className="text-[53px] font-bold leading-[60px]">Clapham</h3>
        </div>
      </article>
    </section>
  )
}

function TabBar() {
  return (
    <nav className="flex h-[186px] rounded-full border-[3px] border-[#3a3b3f] bg-[#1c1d20] p-[9px] font-['Inter',sans-serif] text-[30px] font-semibold leading-9 text-[#fafafa]">
      <a href="#courts" className="flex flex-[111] flex-col items-center rounded-full bg-[#414144] pt-[18px] text-[#ff8552]">
        <svg className="h-[84px] w-[92px]" viewBox="0 -10 92 84">
          <rect width="92" height="63" rx="12" fill="#ff8552" />
          <g fill="none" stroke="#414144" strokeWidth="4">
            <path d="M46 0V63" strokeWidth="5" />
            <circle cx="46" cy="31.500" r="14" />
            <path d="M0 17H10Q15 17 15 22V41Q15 46 10 46H0M92 17H82Q77 17 77 22V41Q77 46 82 46H92" />
          </g>
          <circle cx="46" cy="31.500" r="5.500" fill="#414144" />
        </svg>
        <span className="mt-[3px]">Courts</span>
      </a>
      <a href="#runs" className="flex flex-[91] flex-col items-center pt-[18px]">
        <svg className="h-[84px] w-[69px]" viewBox="0 -10 69 84" fill="#fafafa">
          <path fillRule="evenodd" d="M10 0H59Q69 0 69 10V53Q69 63 59 63H10Q0 63 0 53V10Q0 0 10 0ZM11 16Q6 16 6 21V52Q6 57 11 57H58Q63 57 63 52V21Q63 16 58 16Z" />
          <path d="M26 23.500h5v5h-5ZM37 23.500h5v5h-5ZM48.500 23.500h5v5h-5ZM15 34.500h5v5h-5ZM26 34.500h5v5h-5ZM37 34.500h5v5h-5ZM48.500 34.500h5v5h-5ZM15 45.500h5v5h-5ZM26 45.500h5v5h-5ZM37 45.500h5v5h-5Z" />
        </svg>
        <span className="mt-[3px]">Runs</span>
      </a>
      <a href="#teams" className="flex flex-[123] flex-col items-center pt-[18px]">
        <svg className="h-[84px] w-[130px]" viewBox="0 -11 130 84" fill="#fafafa">
          <circle cx="26" cy="18" r="12.500" />
          <circle cx="104" cy="18" r="12.500" />
          <ellipse cx="65" cy="15.500" rx="14" ry="15" />
          <path d="M36 58C36 46 48 37 65 37S94 46 94 58Q94 62 90 62H40Q36 62 36 58Z" />
          <path d="M1 58C1 46 12 37 27 37Q36 37 41 41Q31 49 32 62H4Q1 62 1 58Z" />
          <path d="M129 58C129 46 118 37 103 37Q94 37 89 41Q99 49 98 62H126Q129 62 129 58Z" />
        </svg>
        <span className="mt-[3px]">Teams</span>
      </a>
      <a href="#chats" className="relative flex flex-[91] flex-col items-center pt-[18px]">
        <svg className="h-[84px] w-[100px]" viewBox="0 -3 100 84" fill="#fafafa">
          <path d="M15 1H60Q73 1 75 14H54Q34 16 33 36Q32 50 34 61L24 71Q18 74 18 68V59H15Q1 59 1 45V15Q1 1 15 1Z" />
          <rect x="37" y="18" width="61" height="48" rx="12" />
          <path d="M63 64L78 77Q83 80 83 74V64Z" />
        </svg>
        <span className="mt-[3px]">Chats</span>
        <span className="absolute left-1/2 top-[6px] ml-[42px] flex size-[59px] items-center justify-center rounded-full bg-[#ff4245] text-[38px] font-normal">1</span>
      </a>
      <a href="#profile" className="flex flex-[111] flex-col items-center pt-[18px]">
        <svg className="h-[84px] w-[70px]" viewBox="0 -7 70 84">
          <circle cx="35" cy="35" r="35" fill="#fafafa" />
          <circle cx="35" cy="27.500" r="12.500" fill="#1c1d20" />
          <path d="M14 55Q22 46.500 35 46.500T56 55Q48 64 35 64T14 55Z" fill="#1c1d20" />
        </svg>
        <span className="mt-[3px]">Profile</span>
      </a>
    </nav>
  )
}

function App() {
  return (
    <div className="relative h-screen overflow-hidden bg-[#0a0b0c] font-['Liberation_Sans',Arial,sans-serif] text-white">
      <StatusBar />
      <Header />
      <main className="px-12">
        <h2 className="mb-[54px] mt-[78px] text-[53px] font-bold leading-[60px]">Map</h2>
        <MapCard />
        <Friends />
        <Courts />
      </main>

      {/* Fade behind the floating tab bar */}
      <div className="pointer-events-none absolute inset-x-0 bottom-0 z-30 h-[320px] bg-linear-to-b from-transparent to-[#0a0b0c]/85 to-75%" />
      <div className="absolute inset-x-0 bottom-0 z-40 px-16 pb-[63px]">
        <TabBar />
      </div>
    </div>
  )
}

export default App
